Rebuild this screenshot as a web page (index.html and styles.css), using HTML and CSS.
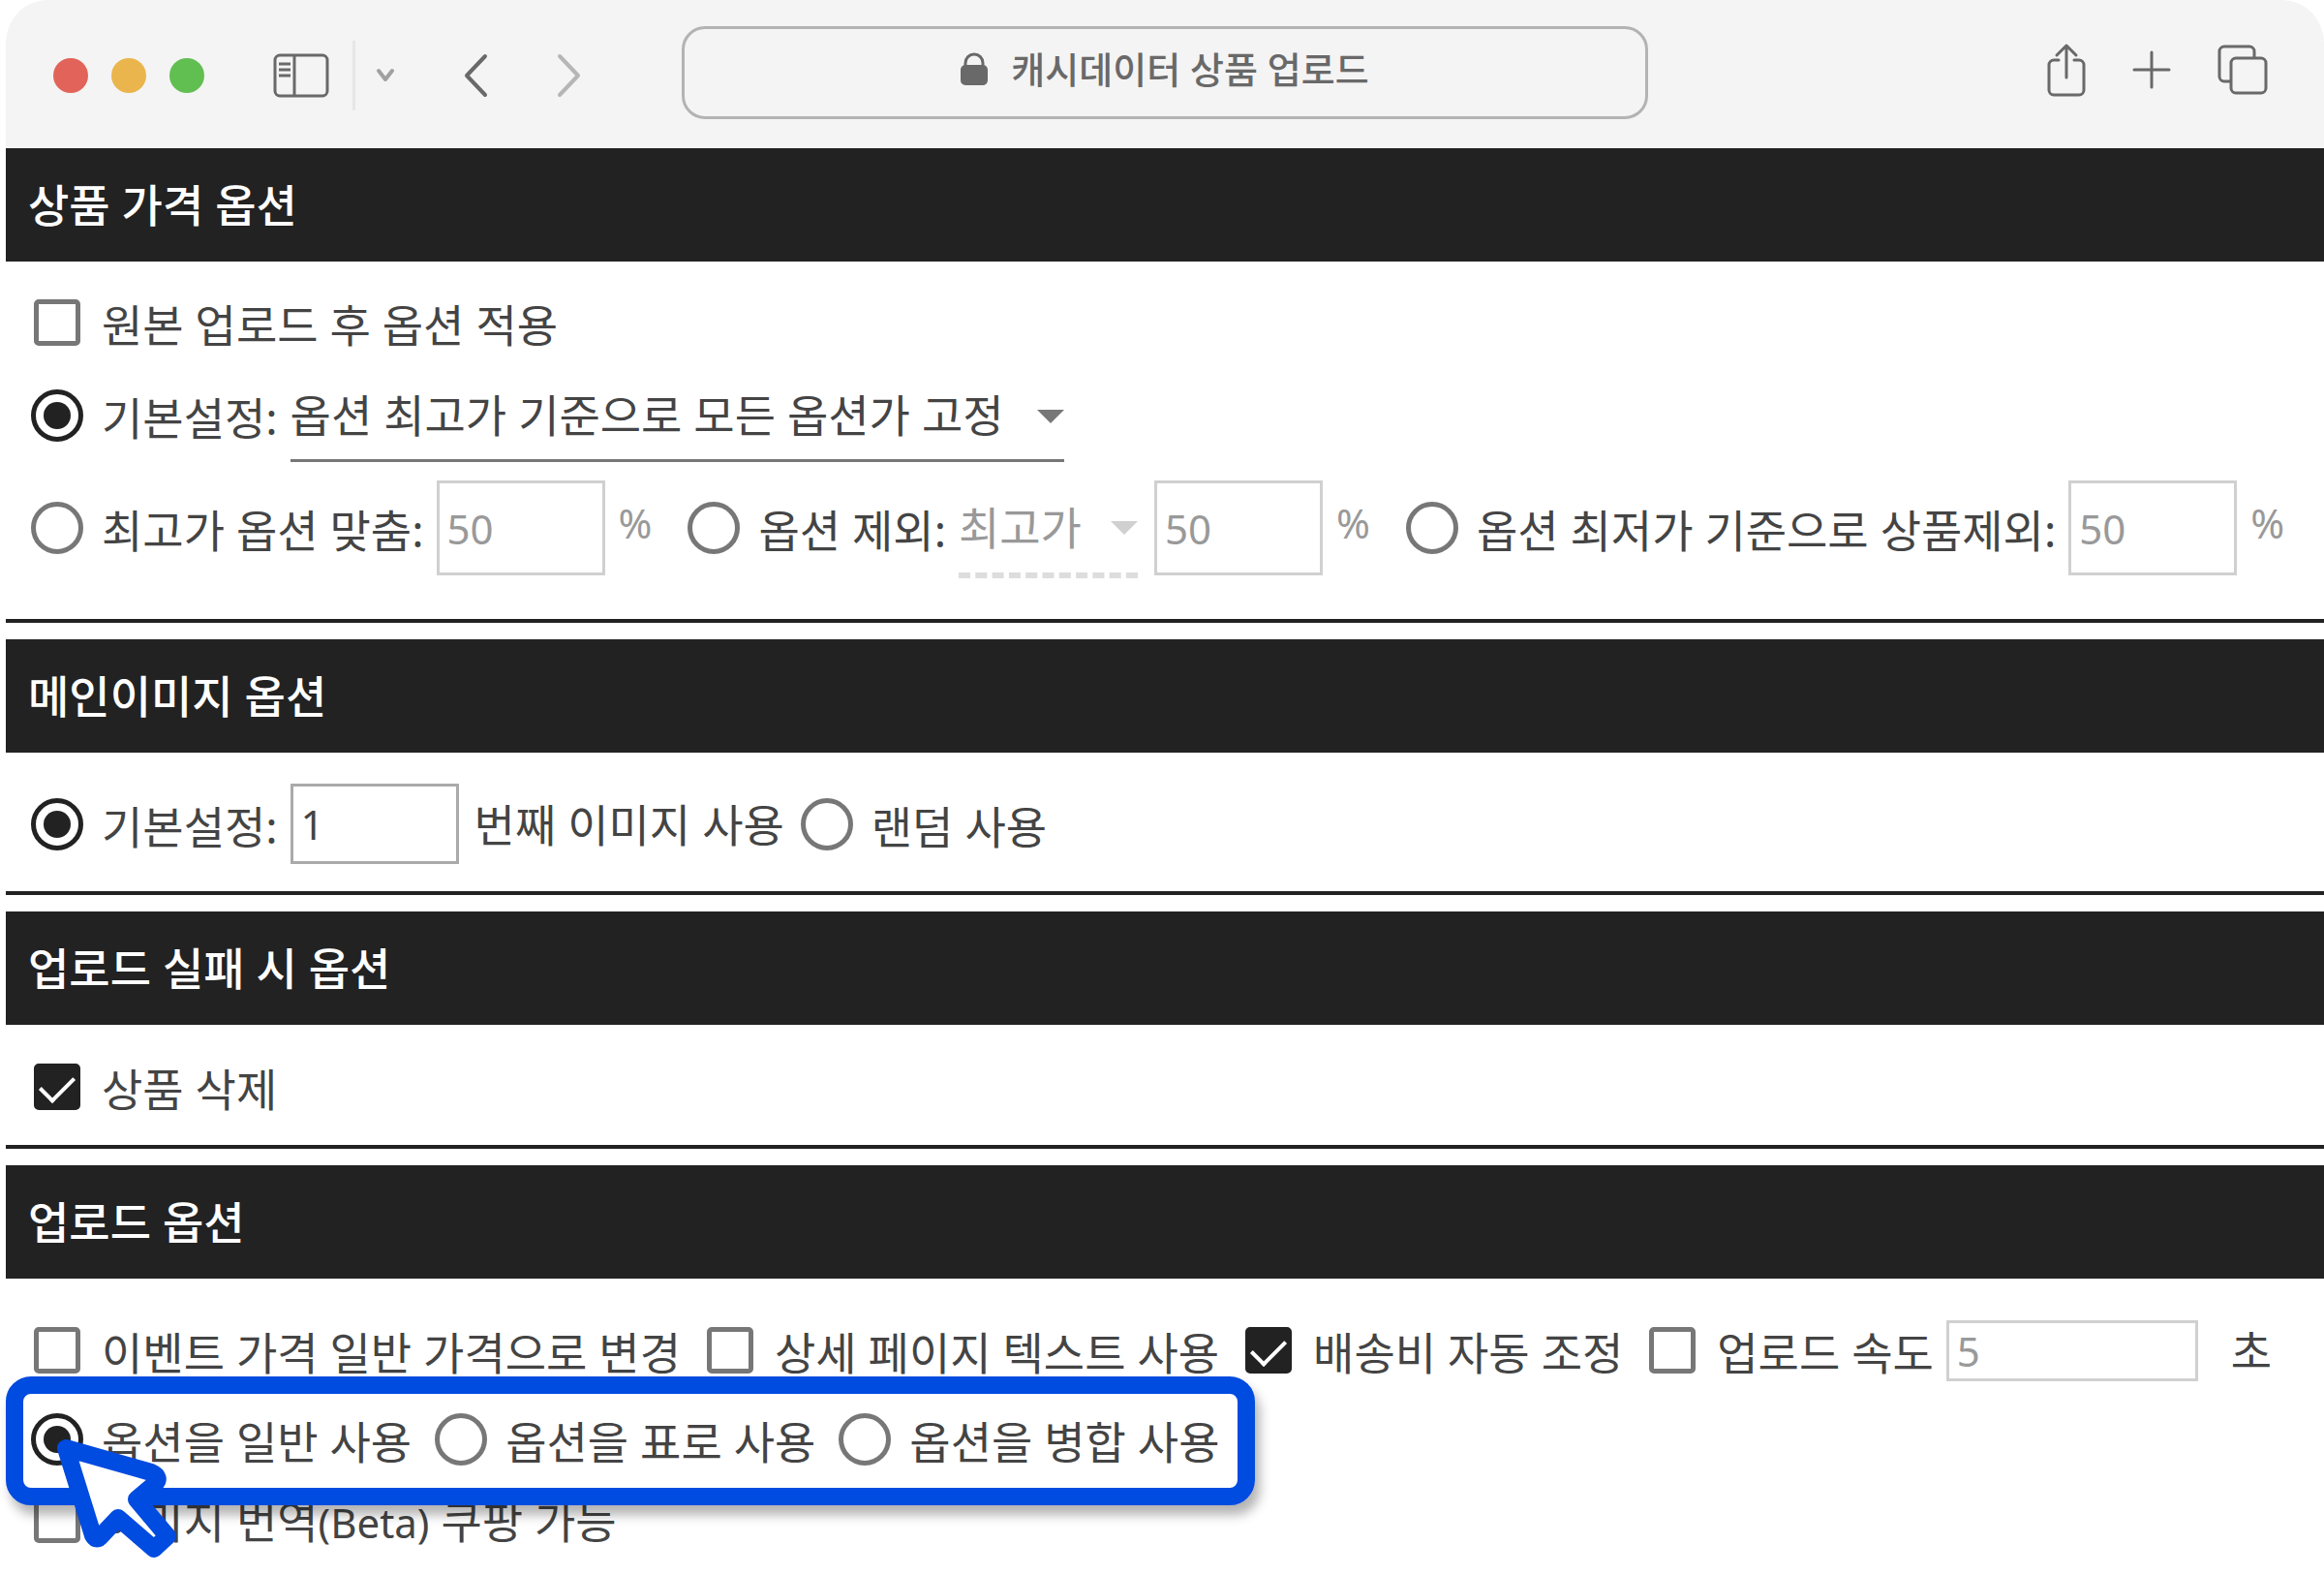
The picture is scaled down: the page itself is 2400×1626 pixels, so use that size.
FILE: index.html
```html
<!DOCTYPE html>
<html lang="ko">
<head>
  <meta charset="UTF-8"/>
  <meta name="viewport" content="width=device-width,initial-scale=1"/>
  <title>캐시데이터 상품 업로드</title>
  <link rel="stylesheet" href="styles.css">
</head>
<body>

  <div class="window">
    <header class="toolbar">
      <div class="toolbar-left">
        <div class="lights">
          <span class="light red"></span>
          <span class="light yellow"></span>
          <span class="light green"></span>
        </div>
        <button type="button" class="icon-btn sidebar-btn" aria-label="사이드바">
          <svg width="58" height="46" viewBox="0 0 58 46" fill="none" stroke="#696969" stroke-width="3">
            <rect x="2" y="2" width="54" height="42" rx="5"/>
            <path d="M22 2v42M6 11h12M6 17h12M6 23h12"/>
          </svg>
        </button>
        <span class="divider"></span>
        <button type="button" class="icon-btn chevron-btn" aria-label="탭 그룹">
          <svg width="20" height="16" viewBox="0 0 20 16" fill="none" stroke="#a0a0a0" stroke-width="4" stroke-linecap="round" stroke-linejoin="round">
            <path d="M3 3l7 9 7-9"/>
          </svg>
        </button>
        <button type="button" class="icon-btn back-btn" aria-label="뒤로">
          <svg width="26" height="46" viewBox="0 0 26 46" fill="none" stroke="#696969" stroke-width="4" stroke-linecap="round" stroke-linejoin="round">
            <path d="M22 3L3 23l19 20"/>
          </svg>
        </button>
        <button type="button" class="icon-btn forward-btn" aria-label="앞으로">
          <svg width="26" height="46" viewBox="0 0 26 46" fill="none" stroke="#b6b6b6" stroke-width="4" stroke-linecap="round" stroke-linejoin="round">
            <path d="M3 3l19 20L3 43"/>
          </svg>
        </button>
      </div>

      <div class="address">
        <svg width="28" height="34" viewBox="0 0 28 34" aria-hidden="true">
          <path d="M5 15V11a9 9 0 0 1 18 0v4" fill="none" stroke="#696969" stroke-width="3"/>
          <rect x="0" y="13" width="28" height="21" rx="5" fill="#696969"/>
        </svg>
        <span>캐시데이터 상품 업로드</span>
      </div>

      <div class="toolbar-right">
        <button type="button" class="icon-btn" aria-label="공유">
          <svg width="40" height="56" viewBox="0 0 40 56" fill="none" stroke="#696969" stroke-width="3" stroke-linecap="round" stroke-linejoin="round">
            <path d="M12 18H7a5 5 0 0 0-5 5v26a5 5 0 0 0 5 5h26a5 5 0 0 0 5-5V23a5 5 0 0 0-5-5h-5M20 36V3M10 13L20 3l10 10"/>
          </svg>
        </button>
        <button type="button" class="icon-btn" aria-label="새 탭">
          <svg width="40" height="40" viewBox="0 0 40 40" fill="none" stroke="#696969" stroke-width="3" stroke-linecap="round">
            <path d="M20 2v36M2 20h36"/>
          </svg>
        </button>
        <button type="button" class="icon-btn" aria-label="탭 모두 보기">
          <svg width="52" height="52" viewBox="0 0 52 52" fill="none" stroke="#696969" stroke-width="3" stroke-linejoin="round">
            <path d="M14 38H7a5 5 0 0 1-5-5V7a5 5 0 0 1 5-5h26a5 5 0 0 1 5 5v7"/>
            <rect x="14" y="14" width="36" height="36" rx="5"/>
          </svg>
        </button>
      </div>
    </header>

    <form>
      <section class="panel price">
        <h2>상품 가격 옵션</h2>
        <div class="panel-body">
          <div class="row">
            <label class="option"><input type="checkbox"><span>원본 업로드 후 옵션 적용</span></label>
          </div>
          <div class="row">
            <label class="option"><input type="radio" name="price" checked><span>기본설정:</span></label>
            <div class="select">
              <select aria-label="기본설정">
                <option>옵션 최고가 기준으로 모든 옵션가 고정</option>
              </select>
            </div>
          </div>
          <div class="row">
            <label class="option"><input type="radio" name="price"><span>최고가 옵션 맞춤:</span></label>
            <input type="text" class="field" value="50" aria-label="최고가 옵션 맞춤" disabled>
            <span class="unit">%</span>
            <label class="option next"><input type="radio" name="price"><span>옵션 제외:</span></label>
            <div class="select disabled">
              <select aria-label="옵션 제외" disabled>
                <option>최고가</option>
              </select>
            </div>
            <input type="text" class="field" value="50" aria-label="옵션 제외 비율" disabled>
            <span class="unit">%</span>
            <label class="option next"><input type="radio" name="price"><span>옵션 최저가 기준으로 상품제외:</span></label>
            <input type="text" class="field" value="50" aria-label="상품제외 비율" disabled>
            <span class="unit">%</span>
          </div>
        </div>
      </section>

      <section class="panel">
        <h2>메인이미지 옵션</h2>
        <div class="panel-body">
          <div class="row">
            <label class="option"><input type="radio" name="image" checked><span>기본설정:</span></label>
            <input type="text" class="field short" value="1" aria-label="이미지 번호">
            <span class="suffix">번째 이미지 사용</span>
            <label class="option"><input type="radio" name="image"><span>랜덤 사용</span></label>
          </div>
        </div>
      </section>

      <section class="panel">
        <h2>업로드 실패 시 옵션</h2>
        <div class="panel-body">
          <div class="row">
            <label class="option"><input type="checkbox" checked><span>상품 삭제</span></label>
          </div>
        </div>
      </section>

      <section class="panel upload">
        <h2>업로드 옵션</h2>
        <div class="panel-body">
          <div class="row spaced">
            <label class="option"><input type="checkbox"><span>이벤트 가격 일반 가격으로 변경</span></label>
            <label class="option"><input type="checkbox"><span>상세 페이지 텍스트 사용</span></label>
            <label class="option"><input type="checkbox" checked><span>배송비 자동 조정</span></label>
            <div class="speed">
              <label class="option"><input type="checkbox"><span>업로드 속도</span></label>
              <input type="text" class="field wide" value="5" aria-label="업로드 속도" disabled>
              <span class="seconds">초</span>
            </div>
          </div>
          <div class="row spaced highlight">
            <label class="option"><input type="radio" name="mode" checked><span>옵션을 일반 사용</span></label>
            <label class="option"><input type="radio" name="mode"><span>옵션을 표로 사용</span></label>
            <label class="option"><input type="radio" name="mode"><span>옵션을 병합 사용</span></label>
            <svg class="pointer" width="140" height="140" viewBox="0 0 140 140" aria-hidden="true">
              <path d="M18 16L106 41Q117 46 110 53L91 69L123 107L109 120L72 88L55 106Q50 113 46 106Z" fill="#fff" stroke="#004be0" stroke-width="18" stroke-linejoin="round"/>
            </svg>
          </div>
          <div class="row">
            <label class="option"><input type="checkbox"><span>이미지 번역<small>(Beta)</small> 쿠팡 가능</span></label>
          </div>
        </div>
      </section>
    </form>
  </div>

</body>
</html>
```
FILE: styles.css
```css
:root {
  --dark: #222;
  --text: #444;
  --muted: #999;
  --line: #777;
  --field: #aaa;
  --field-off: #d0d0d0;
  --icon: #696969;
  --blue: #004be0;
}

* { box-sizing: border-box; margin: 0; padding: 0; }

body {
  min-height: 100vh;
  background: #fff;
  color: var(--text);
  font-family: "Noto Sans", "Noto Sans CJK KR", sans-serif;
  font-size: 46px;
  line-height: 60px;
}

input, select, button {
  font-family: inherit;
  color: inherit;
}

.window {
  padding-left: 6px;
}

/* Browser toolbar */
.toolbar {
  display: grid;
  grid-template-columns: 7fr 10fr 7fr;
  align-items: center;
  height: 153px;
  padding-bottom: 3px;
  background: #f4f4f4;
  border-radius: 44px 44px 0 0;
}

.toolbar-left {
  display: flex;
  align-items: center;
  padding: 6px 0 0 49px;
}

.lights {
  display: flex;
  gap: 24px;
}

.light {
  width: 36px;
  height: 36px;
  border-radius: 50%;
}

.red { background: #e26359; }
.yellow { background: #eab54c; }
.green { background: #61bf51; }

.icon-btn {
  display: flex;
  background: none;
  border: none;
  cursor: pointer;
}

.sidebar-btn { margin-left: 71px; }
.chevron-btn { margin-left: 21px; }
.back-btn { margin-left: 71px; }
.forward-btn { margin-left: 70px; }

.divider {
  width: 3px;
  height: 72px;
  margin-left: 24px;
  background: #e6e6e6;
}

.address {
  display: flex;
  align-items: center;
  justify-content: center;
  gap: 24px;
  height: 96px;
  padding-bottom: 8px;
  border: 3px solid #b3b3b3;
  border-radius: 24px;
  color: var(--icon);
  font-size: 38px;
  font-weight: 500;
}

.toolbar-right {
  display: flex;
  align-items: center;
  justify-content: flex-end;
  gap: 48px;
  padding: 0 58px 6px 0;
}

/* Option panels */
.panel {
  margin-bottom: 17px;
  border-bottom: 4px solid var(--dark);
}

.panel h2 {
  height: 117px;
  padding-left: 23px;
  background: var(--dark);
  color: #fff;
  font-size: 46px;
  font-weight: 500;
  line-height: 117px;
}

.panel-body {
  display: flex;
  flex-direction: column;
  align-items: flex-start;
  gap: 16px;
  padding: 32px 0 28px 25px;
}

.price .panel-body {
  padding-top: 31px;
  padding-bottom: 42px;
}

.upload {
  margin-bottom: 0;
  border-bottom: none;
}

.upload .panel-body {
  gap: 18px;
  padding-top: 42px;
}

.row, .speed {
  display: flex;
  align-items: center;
  min-height: 63px;
  white-space: nowrap;
}

.spaced { gap: 23px; }

.option {
  display: flex;
  align-items: center;
  gap: 18px;
  cursor: pointer;
}

.option span { padding-top: 4px; }
.option small { font-size: 42px; }

.option + .field, .option + .select { margin-left: 13px; }
.select + .field { margin-left: 17px; }
.next { margin-left: 36px; }

input[type="checkbox"], input[type="radio"] {
  appearance: none;
  display: grid;
  place-items: center;
  flex: none;
  background: #fff;
  border: 5px solid var(--line);
}

input[type="checkbox"] {
  width: 48px;
  height: 48px;
  margin: 0 4px;
  border-radius: 5px;
}

input[type="checkbox"]:checked {
  background: var(--dark);
  border-color: var(--dark);
}

input[type="checkbox"]:checked::after {
  content: "";
  width: 16px;
  height: 30px;
  margin-bottom: 12px;
  border: solid #fff;
  border-width: 0 4px 4px 0;
  transform: rotate(45deg);
}

input[type="radio"] {
  width: 54px;
  height: 54px;
  margin: 0 1px;
  border-radius: 50%;
}

input[type="radio"]:checked { border-color: var(--dark); }

input[type="radio"]:checked::after {
  content: "";
  width: 28px;
  height: 28px;
  border-radius: 50%;
  background: var(--dark);
}

.field {
  width: 174px;
  height: 98px;
  padding: 0 8px;
  background: #fff;
  border: 3px solid var(--field);
  border-radius: 0;
  font-size: 42px;
}

.field:disabled {
  border-color: var(--field-off);
  color: var(--muted);
}

.short { height: 83px; }

.wide {
  width: 260px;
  height: 63px;
}

.unit {
  margin-left: 14px;
  padding-bottom: 10px;
  color: var(--muted);
  font-size: 42px;
}

.suffix { margin: 0 16px; }

.seconds { margin-left: 34px; }

.select { position: relative; }

.select select {
  appearance: none;
  display: block;
  height: 96px;
  padding-right: 62px;
  background: none;
  border: none;
  border-bottom: 3px solid var(--line);
  border-radius: 0;
  font-size: 46px;
}

.select::after {
  content: "";
  position: absolute;
  top: 42px;
  right: 0;
  border: 14px solid transparent;
  border-top-color: var(--line);
  border-bottom: none;
  pointer-events: none;
}

.select.disabled select {
  height: 104px;
  padding-top: 4px;
  padding-right: 58px;
  border-bottom: 6px dashed #ddd;
  color: var(--muted);
  opacity: 1;
}

.select.disabled::after {
  top: 45px;
  border-top-color: #d0d0d0;
}

/* Frame and pointer lie over the neighbouring rows */
.highlight {
  position: relative;
  z-index: 1;
  margin-top: 10px;
}

.highlight::after {
  content: "";
  position: absolute;
  inset: -33px -36px -36px -25px;
  border: 18px solid var(--blue);
  border-radius: 26px;
  box-shadow: 5px 10px 12px rgba(0,0,0,0.3);
  pointer-events: none;
}

.pointer {
  position: absolute;
  z-index: 1;
  top: 25px;
  left: 19px;
  pointer-events: none;
}
```
